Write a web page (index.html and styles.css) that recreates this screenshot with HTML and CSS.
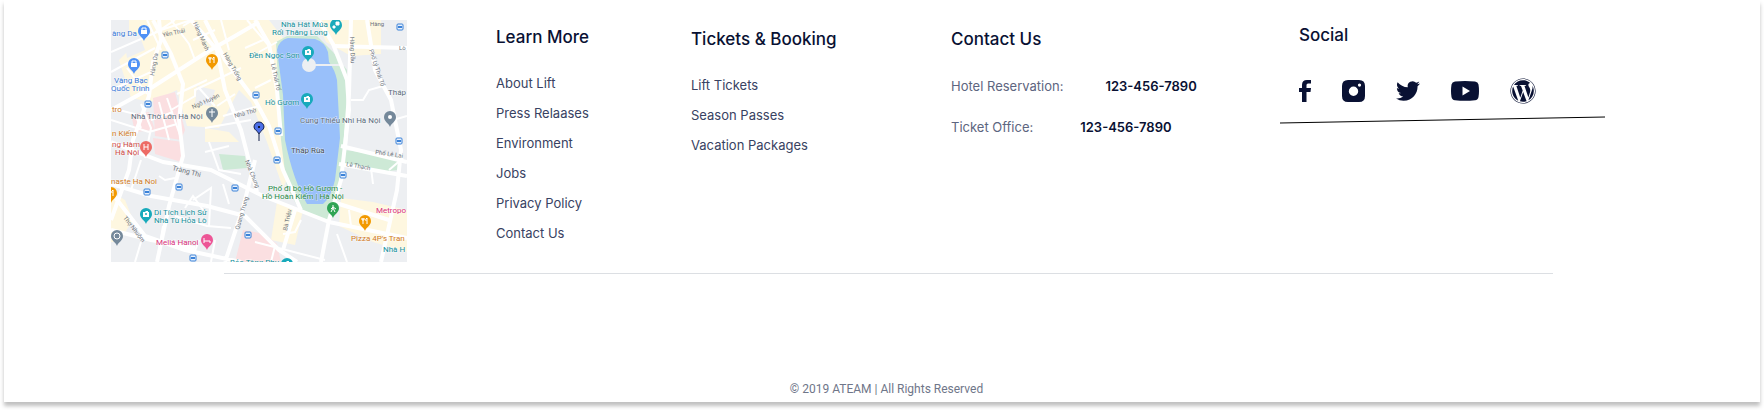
FILE: index.html
```html
<!DOCTYPE html>
<html lang="en">
<head>
<meta charset="utf-8">
<meta name="viewport" content="width=device-width, initial-scale=1">
<title>ATEAM</title>
<link rel="stylesheet" href="styles.css">
</head>
<body>
<footer class="footer">
  <div class="columns">
    <svg class="map" viewBox="0 0 296 242" role="img" aria-label="Map of Hanoi">
      <rect width="296" height="242" fill="#edeff2"/>
      <!-- built-up areas -->
      <g fill="#fef7e0">
        <path d="M18 0H158L172 18 165 32 174 120 180 150 172 168 156 122 140 82 128 70 108 108 76 106 66 70 40 82 20 78 8 40 18 30Z"/>
        <path d="M144 60 164 66 172 120 168 150 154 112Z"/>
        <path d="M205 0H270V34L240 36 215 22Z"/>
        <path d="M0 172 14 180 22 200 8 222 0 222Z"/>
        <path d="M166 182 192 190 184 225 160 220Z"/>
        <path d="M230 178 262 182 296 190V232L262 222 228 206Z"/>
        <path d="M94 108 118 112 128 122H94Z"/>
      </g>
      <g fill="#edeff2">
        <path d="M12 12 28 14 34 30 16 38Z"/>
        <path d="M86 66 104 70 100 86 84 84Z"/>
      </g>
      <g fill="#fbdfe1">
        <path d="M42 78 64 72 74 110 70 120 44 116Z"/>
        <path d="M42 118 72 122 70 142 44 134Z"/>
        <path d="M20 94 38 92 44 110 24 112Z"/>
        <path d="M132 210 154 214 166 224 170 242H124Z"/>
      </g>
      <!-- parks and lake -->
      <g fill="#cde9d6">
        <path d="M165 22 176 16 206 16 222 32 236 50 236 118 228 170 218 200 190 192 176 168 170 120Z"/>
        <path d="M108 134 134 136 136 148 112 150Z"/>
        <path d="M234 130 292 138 288 150 264 152 232 146Z"/>
      </g>
      <path d="M166 30Q168 20 177 18L204 19Q214 22 217 32L218 42Q224 50 226 60L229 118 224 160Q220 178 212 184L196 184Q182 160 174 120L172 75Z" fill="#99c0fa"/>
      <circle cx="198" cy="45" r="7" fill="#edeff2"/>
      <path d="M204 45H240" stroke="#edeff2" stroke-width="2"/>
      <!-- side streets -->
      <g fill="none" stroke="#fff" stroke-width="2">
        <path d="M0 32 46 12 64 0M0 52 44 28M0 70 40 52M16 48 36 74M36 0 50 30M44 12 80 0M60 0 78 24 84 40M72 6 82 0M82 20 104 10"/>
        <path d="M60 90 84 76 84 70 130 48M66 74 96 60M88 68 104 86M106 86 124 74M112 96 148 86M94 108 140 100M134 28 152 20M118 30 110 0M136 0 158 26"/>
        <path d="M40 100 62 92M38 112 66 104M30 84 40 108 34 138M48 82 58 120M56 78 70 118M0 100 38 112M0 88 24 94 30 108"/>
        <path d="M94 132 118 126M98 122 108 150 130 154M112 164 118 184M74 188 82 176 92 190M82 180 100 168 98 206M48 156 54 160 64 158M30 140 20 170M64 196 96 206 120 208"/>
        <path d="M144 68 160 60M148 32 166 22M240 80 252 80 258 70 272 66M282 100 296 96M260 148 262 164M278 150 292 138M190 200 184 212 172 214M238 190 240 206"/>
        <path d="M80 242 88 220M100 242 104 220M30 222 24 242M52 206 48 230M144 222 214 240M160 242 164 226M236 242 226 214"/>
      </g>
      <!-- main streets -->
      <g fill="none" stroke="#fff" stroke-width="4" stroke-linejoin="round">
        <path d="M42 0 60 34 72 64 68 100 72 136 58 186 46 242"/>
        <path d="M48 0 50 20 42 42 38 76 22 120 18 150 0 200"/>
        <path d="M0 90 40 68 96 32 124 16 148 2"/>
        <path d="M80 0 106 30 114 70 130 110 146 172"/>
        <path d="M94 0 114 40 144 80 158 106 172 150 190 190"/>
        <path d="M144 0 158 24 166 70 170 116"/>
        <path d="M208 0 222 24 236 60 238 90 230 160 218 200 210 242"/>
        <path d="M240 0 238 74 234 128M222 26 296 28M256 0 264 50 280 80 290 130 286 170 270 242"/>
        <path d="M0 122 52 142 100 150 152 176 218 202 296 218"/>
        <path d="M0 164 40 176 96 186 134 196 168 230 186 242"/>
        <path d="M0 172 34 216 74 230 130 242M0 210 40 220 84 228M144 140 132 188 114 242"/>
        <path d="M230 126 296 142M228 144 296 156M222 182 278 200M184 190 172 230"/>
      </g>
      <g class="street">
        <text transform="translate(52 17) rotate(-12)">Yên Thái</text>
        <text transform="translate(43 56) rotate(-80)">Hàng Da</text>
        <text transform="translate(82 3) rotate(66)">Hàng Mành</text>
        <text transform="translate(112 34) rotate(60)">Hàng Trống</text>
        <text transform="translate(82 89) rotate(-24)">Ngõ Huyện</text>
        <text transform="translate(124 98) rotate(-16)">Nhà Thờ</text>
        <text transform="translate(160 44) rotate(78)">Lê Thái Tổ</text>
        <text transform="translate(239 17) rotate(88)">Hàng Dầu</text>
        <text transform="translate(258 30) rotate(72)">Phố Lý Thái Tổ</text>
        <text x="259" y="6">Hàng</text>
        <text x="288" y="30">Lò</text>
        <text class="wide" transform="translate(61 150) rotate(14)">Tràng Thi</text>
        <text transform="translate(134 141) rotate(68)">Nhà Chung</text>
        <text transform="translate(128 210) rotate(-74)">Quang Trung</text>
        <text transform="translate(12 198) rotate(52)">Thợ Nhuộm</text>
        <text transform="translate(176 211) rotate(-78)">Bà Triệu</text>
        <text transform="translate(235 146) rotate(10)">Lê Thạch</text>
        <text transform="translate(264 134) rotate(8)">Phố Lê Lai</text>
      </g>
      <defs>
        <path id="pin" d="M0 0C-1-4-6-5-6-10A6 6 0 0 1 6-10C6-5 1-4 0 0Z"/>
        <g id="bus"><rect x="-3" y="-3" width="6" height="6" rx="1" fill="#e8f1fd" stroke="#3b82d8"/><path d="M-2-1H2V1H-2Z" fill="#3b82d8"/></g>
        <g id="bag"><rect x="-3" y="-11" width="6" height="4" fill="#fff"/><path d="M-2-11V-13H2V-11" fill="none" stroke="#fff"/></g>
        <g id="cam"><path d="M-3-12H-1L0-13H2V-12H3V-7H-3Z" fill="#fff"/><circle cy="-10" r="1" fill="#18aabb"/></g>
        <path id="fork" d="M-2-13V-7M-3-13V-11H-1V-13M2-7V-13Q0-12 1-10" fill="none" stroke="#fff"/>
      </defs>
      <use href="#bus" x="54" y="35"/><use href="#bus" x="37" y="84"/><use href="#bus" x="145" y="75"/><use href="#bus" x="289" y="7"/><use href="#bus" x="167" y="111"/><use href="#bus" x="288" y="121"/><use href="#bus" x="68" y="167"/><use href="#bus" x="36" y="172"/><use href="#bus" x="124" y="168"/><use href="#bus" x="137" y="215"/><use href="#bus" x="82" y="238"/><use href="#bus" x="166" y="140"/><use href="#bus" x="232" y="155"/>
      <g transform="translate(33 21)"><use href="#pin" fill="#4f91f5"/><use href="#bag"/></g>
      <g transform="translate(23 54)"><use href="#pin" fill="#4f91f5"/><use href="#bag"/></g>
      <g transform="translate(101 50)"><use href="#pin" fill="#f29900"/><use href="#fork"/></g>
      <g transform="translate(101 103)"><use href="#pin" fill="#74889a"/><path d="M0-14V-6M-3-11H3" stroke="#fff"/></g>
      <g transform="translate(225 15)"><use href="#pin" fill="#18aabb"/><path d="M-3-9H-1V-7H-3ZM0-13H3V-10H0Z" fill="#fff" stroke="#fff"/></g>
      <g transform="translate(197 42)"><use href="#pin" fill="#18aabb"/><use href="#cam"/></g>
      <g transform="translate(196 89)"><use href="#pin" fill="#18aabb"/><use href="#cam"/></g>
      <g transform="translate(279 107)"><use href="#pin" fill="#74889a"/><circle cy="-10" r="2" fill="#fff"/></g>
      <g transform="translate(35 137)"><use href="#pin" fill="#ed6b65"/><path d="M-2-13V-7M2-13V-7M-2-10H2" stroke="#fff"/></g>
      <g transform="translate(0 183)"><use href="#pin" fill="#f29900"/><use href="#fork"/></g>
      <g transform="translate(35 204)"><use href="#pin" fill="#18aabb"/><use href="#cam"/></g>
      <g transform="translate(6 226)"><use href="#pin" fill="#74889a"/><circle cy="-10" r="3" fill="none" stroke="#fff"/></g>
      <g transform="translate(96 230)"><use href="#pin" fill="#ed5596"/><path d="M-3-12V-7M-3-9H3V-7" fill="none" stroke="#fff"/></g>
      <g transform="translate(222 198)"><use href="#pin" fill="#2fa455"/><path d="M0-13V-10L-2-6M0-10 2-6M-2-9 0-11 3-9" fill="none" stroke="#fff"/></g>
      <g transform="translate(254 211)"><use href="#pin" fill="#f29900"/><use href="#fork"/></g>
      <g transform="translate(176 254)"><use href="#pin" fill="#18aabb"/><use href="#cam"/></g>
      <g class="place">
        <g fill="#3a7ad8"><text x="1" y="16">àng Da</text><text x="3" y="63">Vàng Bạc</text><text x="0" y="71">Quốc Trinh</text></g>
        <g fill="#15909c"><text x="170" y="7">Nhà Hát Múa</text><text x="161" y="15">Rối Thăng Long</text><text x="138" y="38">Đền Ngọc Sơn</text><text x="154" y="85">Hồ Gươm</text><text x="43" y="195">Di Tích Lịch Sử</text><text x="43" y="203">Nhà Tù Hỏa Lò</text><text x="119" y="245">Bảo Tàng Phụ</text><text x="272" y="232">Nhà H</text></g>
        <g fill="#5c6c7c"><text x="20" y="99">Nhà Thờ Lớn Hà Nội</text><text x="189" y="103">Cung Thiếu Nhi Hà Nội</text><text x="277" y="75">Tháp</text></g>
        <g fill="#d07a1c"><text x="1" y="92">tro</text><text x="1" y="116">n Kiếm</text><text x="0" y="164">naste Ha Noi</text><text x="240" y="221">Pizza 4P's Tran</text></g>
        <g fill="#cf4b48"><text x="1" y="127">ng Hàm</text><text x="4" y="135">Hà Nội</text></g>
        <g fill="#d8317a"><text x="45" y="225">Meliá Hanoi</text><text x="265" y="193">Metropo</text></g>
        <g fill="#258746"><text x="157" y="171">Phố đi bộ Hồ Gươm -</text><text x="151" y="179">Hồ Hoàn Kiếm | Hà Nội</text></g>
        <text x="180" y="133" fill="#444d58">Tháp Rùa</text>
      </g>
      <g transform="translate(148 121)"><path d="M0 0V-7C-1-10-5-11-5-14A5 5 0 0 1 5-14C5-11 1-10 0-7" fill="#4c6fe8" stroke="#14204a"/><circle cy="-14" r="1" fill="#000"/></g>
    </svg>

    <nav class="column middle-high" aria-labelledby="learn">
      <h2 id="learn">Learn More</h2>
      <ul class="links">
        <li><a href="#">About Lift</a></li>
        <li><a href="#">Press Relaases</a></li>
        <li><a href="#">Environment</a></li>
        <li><a href="#">Jobs</a></li>
        <li><a href="#">Privacy Policy</a></li>
        <li><a href="#">Contact Us</a></li>
      </ul>
    </nav>

    <nav class="column" aria-labelledby="tickets">
      <h2 id="tickets">Tickets &amp; Booking</h2>
      <ul class="links">
        <li><a href="#">Lift Tickets</a></li>
        <li><a href="#">Season Passes</a></li>
        <li><a href="#">Vacation Packages</a></li>
      </ul>
    </nav>

    <section class="column">
      <h2>Contact Us</h2>
      <dl class="contacts">
        <div class="contact"><dt>Hotel Reservation:</dt><dd>123-456-7890</dd></div>
        <div class="contact office"><dt>Ticket Office:</dt><dd>123-456-7890</dd></div>
      </dl>
    </section>

    <section class="column social">
      <h2>Social</h2>
      <div class="icons">
        <a href="#" aria-label="Facebook"><svg width="12" height="24" viewBox="0 0 12 24"><path d="M3 23V13H0V9H3V6Q3 1 8 1H12V4.500H9Q7.500 4.500 7.500 6V9H12L11.500 13H7.500V23Z"/></svg></a>
        <a href="#" aria-label="Instagram"><svg width="23" height="24" viewBox="0 0 23 24"><path fill-rule="evenodd" d="M6 1H17Q23 1 23 7V17Q23 23 17 23H6Q0 23 0 17V7Q0 1 6 1ZM11.500 7.500A4.700 4.700 0 1 0 11.500 16.900A4.700 4.700 0 1 0 11.500 7.500ZM17.500 4.500A1.600 1.600 0 1 0 17.500 7.700A1.600 1.600 0 1 0 17.500 4.500Z"/></svg></a>
        <a href="#" aria-label="Twitter"><svg width="24" height="24" viewBox="0 0 24 24"><path d="M23.953 4.570a10 10 0 01-2.825.775 4.958 4.958 0 002.163-2.723c-.951.555-2.005.959-3.127 1.184a4.920 4.920 0 00-8.384 4.482C7.690 8.095 4.067 6.130 1.640 3.162a4.822 4.822 0 00-.666 2.475c0 1.710.870 3.213 2.188 4.096a4.904 4.904 0 01-2.228-.616v.060a4.923 4.923 0 003.946 4.827 4.996 4.996 0 01-2.212.085 4.936 4.936 0 004.604 3.417 9.867 9.867 0 01-6.102 2.105c-.390 0-.779-.023-1.170-.067a13.995 13.995 0 007.557 2.209c9.053 0 13.998-7.496 13.998-13.985 0-.210 0-.420-.015-.630A9.935 9.935 0 0024 4.590z"/></svg></a>
        <a href="#" aria-label="YouTube"><svg width="28" height="24" viewBox="0 0 28 24"><path fill-rule="evenodd" d="M4 2.500Q14 1.500 24 2.500Q27 2.800 27.500 5.500Q28.500 12 27.500 18Q27 21 24 21.300Q14 22.300 4 21.300Q1 21 .5 18Q-.5 12 .5 5.500Q1 2.800 4 2.500ZM11.500 7.500V16.500L19 12Z"/></svg></a>
        <a href="#" aria-label="WordPress"><svg width="26" height="26" viewBox="0 0 512 512"><path d="M61.700 169.400l101.500 278C92.200 413 43.300 340.200 43.300 256c0-30.900 6.600-60.100 18.400-86.600zm337.900 75.900c0-26.300-9.400-44.500-17.500-58.700-10.800-17.500-20.900-32.400-20.900-49.900 0-19.600 14.800-37.800 35.700-37.800.9 0 1.800.1 2.800.2-37.900-34.700-88.300-55.900-143.700-55.900-74.300 0-139.700 38.100-177.800 95.900 5 .2 9.700.3 13.700.3 22.200 0 56.700-2.700 56.700-2.700 11.500-.7 12.800 16.200 1.400 17.500 0 0-11.500 1.300-24.300 2l77.500 230.400L249.800 247l-33.100-90.800c-11.500-.7-22.300-2-22.300-2-11.500-.7-10.100-18.200 1.300-17.500 0 0 35.100 2.700 56 2.700 22.200 0 56.700-2.700 56.700-2.700 11.500-.7 12.800 16.200 1.400 17.500 0 0-11.500 1.300-24.300 2l76.900 228.700 21.200-70.900c9-29.400 16-50.500 16-68.700zm-139.900 29.300l-63.800 185.500c19.100 5.600 39.200 8.700 60.100 8.700 24.800 0 48.500-4.300 70.600-12.100-.6-.9-1.100-1.900-1.500-2.900l-65.400-179.200zm183-120.700c.9 6.800 1.400 14 1.400 21.900 0 21.600-4 45.800-16.200 76.200l-65 187.900C426.200 403 468.700 334.500 468.700 256c0-37-9.400-71.800-26-102.100zM504 256c0 136.800-111.300 248-248 248C119.200 504 8 392.700 8 256 8 119.200 119.200 8 256 8c136.700 0 248 111.200 248 248zm-11.400 0c0-130.500-106.200-236.600-236.600-236.600C125.500 19.400 19.400 125.500 19.400 256S125.600 492.600 256 492.600c130.500 0 236.600-106.100 236.600-236.600z"/></svg></a>
      </div>
      <svg class="underline" viewBox="0 0 325 8" preserveAspectRatio="none" aria-hidden="true"><path d="M0 7 325 1"/></svg>
    </section>
  </div>
  <hr class="divider">
  <p class="copyright">© 2019 ATEAM | All Rights Reserved</p>
</footer>
</body>
</html>
```
FILE: styles.css
```css
* {
  box-sizing: border-box;
}

body {
  margin: 0;
  padding: 0 4px 8px;
  background: #fff;
  color: #091133;
  font-family: Inter, "Liberation Sans", sans-serif;
}

h2,
p,
ul,
dl,
dd {
  margin: 0;
  padding: 0;
}

.footer {
  padding-top: 20px;
  background: #fff;
  box-shadow: 0 4px 4px rgba(0, 0, 0, 0.25);
}

.columns {
  display: grid;
  grid-template-columns: 385fr 195fr 260fr 329fr 325fr;
  align-items: start;
  padding: 0 155px 0 107px;
}

.map {
  display: block;
  width: 296px;
  max-width: 100%;
  font-family: Roboto, "Noto Sans", sans-serif;
}

.street text {
  fill: #6d747c;
  font-size: 6px;
}

.street .wide {
  font-size: 7px;
}

.place text {
  font-size: 8px;
  stroke: rgba(255, 255, 255, 0.6);
  stroke-width: 1px;
  paint-order: stroke;
}

.column {
  padding-top: 7px;
}

.middle-high {
  padding-top: 5px;
}

h2 {
  font-size: 17px;
  font-weight: 500;
  line-height: 24px;
}

.links {
  display: grid;
  padding-top: 19px;
  list-style: none;
  font-size: 13px;
  line-height: 30px;
}

.links a {
  color: #384262;
  text-decoration: none;
}

.contacts {
  display: grid;
  gap: 16px;
  padding-top: 23px;
  font-size: 13px;
  line-height: 25px;
}

.contact {
  display: flex;
  gap: 42px;
}

.office {
  gap: 47px;
}

dt {
  color: #5d6580;
}

dd {
  font-weight: 600;
}

.social {
  padding-top: 3px;
}

.social h2 {
  padding-left: 19px;
}

.icons {
  display: flex;
  align-items: center;
  gap: 31px;
  padding: 31px 0 0 19px;
}

.icons a,
.icons svg {
  display: block;
  fill: #091133;
}

.underline {
  display: block;
  width: 100%;
  height: 8px;
  margin-top: 12px;
  stroke: #000;
}

.divider {
  height: 1px;
  margin: 11px 207px 0 220px;
  border: 0;
  background: #dcdfe3;
}

.copyright {
  padding: 105px 0 3px 9px;
  color: #6f7689;
  font-family: "Liberation Sans Narrow", Roboto, sans-serif;
  font-size: 12px;
  line-height: 20px;
  text-align: center;
}
```
